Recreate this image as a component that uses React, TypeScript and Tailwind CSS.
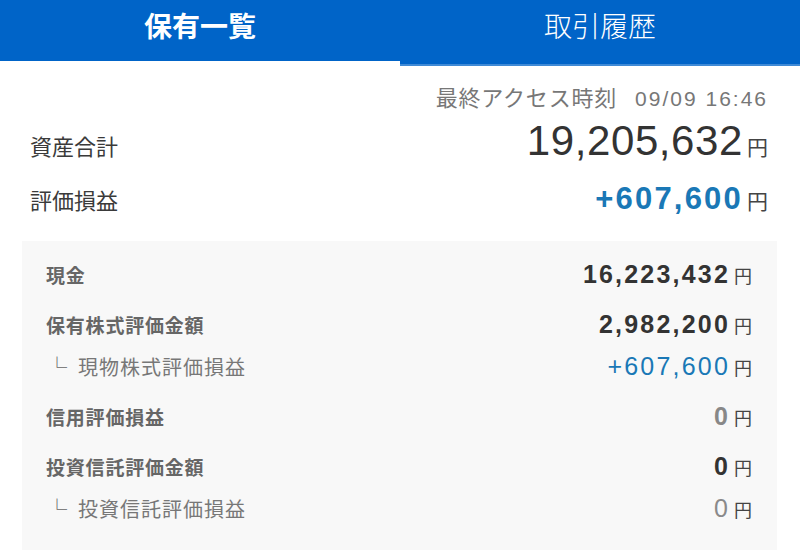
import React from 'react';

const JP = "font-['Noto_Sans_CJK_JP',sans-serif]";
const NUM = "font-['Liberation_Sans','Noto_Sans_CJK_JP',sans-serif]";

type Row = {
  label: string;
  value: string;
  sub?: boolean;
  tone: 'dark' | 'blue' | 'gray' | 'light';
};

const ROWS: Row[][] = [
  [{ label: '現金', value: '16,223,432', tone: 'dark' }],
  [
    { label: '保有株式評価金額', value: '2,982,200', tone: 'dark' },
    { label: '現物株式評価損益', value: '+607,600', sub: true, tone: 'blue' },
  ],
  [{ label: '信用評価損益', value: '0', tone: 'gray' }],
  [
    { label: '投資信託評価金額', value: '0', tone: 'dark' },
    { label: '投資信託評価損益', value: '0', sub: true, tone: 'light' },
  ],
];

const toneClass = {
  dark: 'font-bold text-[#333]',
  blue: 'font-normal text-[#1a78b6]',
  gray: 'font-bold text-[#888]',
  light: 'font-normal text-[#8a8a8a]',
};

const Yen = ({ size = 'text-[19px]' }: { size?: string }) => (
  <span className={`${JP} ${size} text-[#444] ml-[4px]`}>円</span>
);

const App: React.FC = () => {
  return (
    <div className="w-[800px] h-[553px] bg-white overflow-hidden">
      <div className="flex h-[66px] bg-[#0064c8] text-white">
        <div className={`flex-1 flex justify-center pt-[4px] border-b-[5px] border-white ${JP} text-[28px] font-bold`}>
          保有一覧
        </div>
        <div className={`flex-1 flex justify-center pt-[4px] border-b-[2px] border-[#3f8ad6] ${JP} text-[28px] font-light`}>
          取引履歴
        </div>
      </div>

      <div className="pr-[32px] mt-[15px] flex justify-end items-baseline text-[#777] leading-[30px]">
        <span className={`${JP} text-[22px] tracking-[0.8px]`}>最終アクセス時刻</span>
        <span className={`${NUM} text-[21px] ml-[18px] tracking-[2px]`}>09/09 16:46</span>
      </div>

      <div className="flex justify-between items-baseline pl-[30px] pr-[32px] mt-[2px] h-[50px]">
        <span className={`${JP} text-[22px] text-[#3a3a3a]`}>資産合計</span>
        <span className="flex items-baseline">
          <span className={`${NUM} text-[42px] text-[#333] leading-[50px] tracking-[0.6px]`}>19,205,632</span>
          <Yen size="text-[21px]" />
        </span>
      </div>

      <div className="flex justify-between items-baseline pl-[30px] pr-[32px] mt-[10px] h-[44px]">
        <span className={`${JP} text-[22px] text-[#3a3a3a]`}>評価損益</span>
        <span className="flex items-baseline">
          <span className={`${NUM} text-[31px] font-bold text-[#1a78b6] tracking-[2.2px]`}>+607,600</span>
          <Yen size="text-[21px]" />
        </span>
      </div>

      <div className="ml-[22px] mr-[23px] mt-[21px] bg-[#f8f8f8] pt-[13px] pb-[20px] pl-[24px] pr-[25px] flex flex-col gap-[8px]">
        {ROWS.map((group, gi) => (
          <div key={gi} className="flex flex-col">
            {group.map((row) => (
              <div key={row.label} className="flex justify-between items-center h-[42px]">
                {row.sub ? (
                  <span className={`${JP} text-[20px] text-[#777] pl-[1px] flex items-center`}>
                    <span className="mr-[11px] text-[#666]">└</span>
                    <span className="tracking-[1px]">{row.label}</span>
                  </span>
                ) : (
                  <span className={`${JP} text-[19px] font-bold text-[#666] tracking-[0.8px]`}>{row.label}</span>
                )}
                <span className="flex items-baseline">
                  <span className={`${NUM} text-[25px] tracking-[2.2px] ${toneClass[row.tone]}`}>{row.value}</span>
                  <Yen size="text-[18px]" />
                </span>
              </div>
            ))}
          </div>
        ))}
      </div>
    </div>
  );
};

export default App;
